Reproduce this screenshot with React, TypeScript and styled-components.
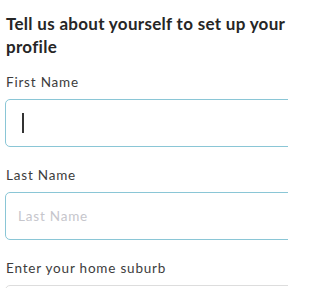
import styled, { createGlobalStyle } from 'styled-components'

const Global = createGlobalStyle`
html, body {
  margin: 0;
  padding: 0;
  background: #ffffff;
}
body {
  font-family: Lato, "Open Sans", "Liberation Sans", sans-serif;
}
`

const Page = styled.div`
width: 288px;
height: 288px;
overflow: hidden;
padding: 12px 0 0 6px;
box-sizing: border-box;
`

const Heading = styled.h1`
margin: 0 0 15px 0;
width: 300px;
font-size: 17px;
line-height: 23px;
font-weight: 700;
color: #262626;
letter-spacing: 0.3px;
`

const Group = styled.div`
display: flex;
flex-direction: column;
margin-bottom: 19px;
`

const Label = styled.label`
font-size: 13.5px;
line-height: 18px;
color: #3c3c3c;
letter-spacing: 0.8px;
margin-bottom: 8px;
`

const Field = styled.div<{ $active?: boolean }>`
margin-left: -1px;
width: 320px;
height: 48px;
flex-shrink: 0;
box-sizing: border-box;
border: 1.5px solid ${p => (p.$active ? '#8ac6d6' : '#dddddd')};
border-radius: 5px;
display: flex;
align-items: center;
padding-left: 16px;
font-size: 13.5px;
letter-spacing: 0.8px;
`

const Caret = styled.span`
display: block;
width: 1.5px;
height: 20px;
background: #333333;
`

const Placeholder = styled.span`
color: #c6c6cc;
margin-left: -4px;
`

export default function App() {
  return (
    <>
      <Global />
      <Page>
        <Heading>Tell us about yourself to set up your profile</Heading>
        <Group>
          <Label>First Name</Label>
          <Field $active>
            <Caret />
          </Field>
        </Group>
        <Group>
          <Label>Last Name</Label>
          <Field $active>
            <Placeholder>Last Name</Placeholder>
          </Field>
        </Group>
        <Group>
          <Label>Enter your home suburb</Label>
          <Field />
        </Group>
      </Page>
    </>
  )
}
